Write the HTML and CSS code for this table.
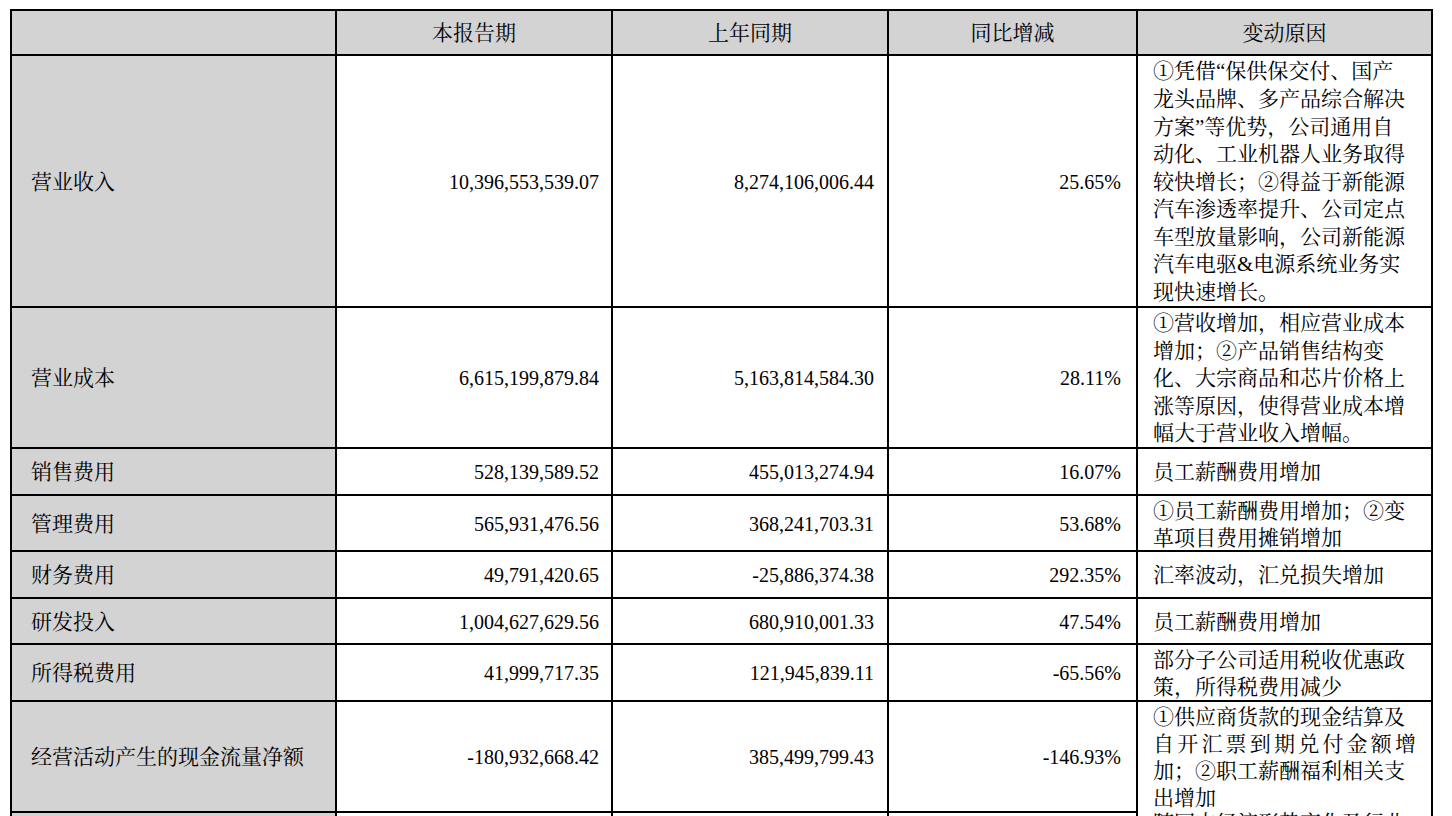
FILE: index.html
```html
<!DOCTYPE html>
<html lang="zh-CN">
<head>
<meta charset="utf-8">
<title>财务数据变动表</title>
<link rel="stylesheet" href="styles.css">
</head>
<body>
<div class="tbl">
  <div class="c head label"></div>
  <div class="c head">本报告期</div>
  <div class="c head">上年同期</div>
  <div class="c head">同比增减</div>
  <div class="c head">变动原因</div>

  <div class="c label">营业收入</div>
  <div class="c num n1">10,396,553,539.07</div>
  <div class="c num n2">8,274,106,006.44</div>
  <div class="c num n3">25.65%</div>
  <div class="c reason">
    <div>①凭借“保供保交付、国产</div>
    <div>龙头品牌、多产品综合解决</div>
    <div>方案”等优势，公司通用自</div>
    <div>动化、工业机器人业务取得</div>
    <div>较快增长；②得益于新能源</div>
    <div>汽车渗透率提升、公司定点</div>
    <div>车型放量影响，公司新能源</div>
    <div>汽车电驱&amp;电源系统业务实</div>
    <div>现快速增长。</div>
  </div>

  <div class="c label">营业成本</div>
  <div class="c num n1">6,615,199,879.84</div>
  <div class="c num n2">5,163,814,584.30</div>
  <div class="c num n3">28.11%</div>
  <div class="c reason">
    <div>①营收增加，相应营业成本</div>
    <div>增加；②产品销售结构变</div>
    <div>化、大宗商品和芯片价格上</div>
    <div>涨等原因，使得营业成本增</div>
    <div>幅大于营业收入增幅。</div>
  </div>

  <div class="c label">销售费用</div>
  <div class="c num n1">528,139,589.52</div>
  <div class="c num n2">455,013,274.94</div>
  <div class="c num n3">16.07%</div>
  <div class="c reason"><div>员工薪酬费用增加</div></div>

  <div class="c label">管理费用</div>
  <div class="c num n1">565,931,476.56</div>
  <div class="c num n2">368,241,703.31</div>
  <div class="c num n3">53.68%</div>
  <div class="c reason tight">
    <div>①员工薪酬费用增加；②变</div>
    <div>革项目费用摊销增加</div>
  </div>

  <div class="c label">财务费用</div>
  <div class="c num n1">49,791,420.65</div>
  <div class="c num n2">-25,886,374.38</div>
  <div class="c num n3">292.35%</div>
  <div class="c reason"><div>汇率波动，汇兑损失增加</div></div>

  <div class="c label">研发投入</div>
  <div class="c num n1">1,004,627,629.56</div>
  <div class="c num n2">680,910,001.33</div>
  <div class="c num n3">47.54%</div>
  <div class="c reason"><div>员工薪酬费用增加</div></div>

  <div class="c label">所得税费用</div>
  <div class="c num n1">41,999,717.35</div>
  <div class="c num n2">121,945,839.11</div>
  <div class="c num n3">-65.56%</div>
  <div class="c reason tight">
    <div>部分子公司适用税收优惠政</div>
    <div>策，所得税费用减少</div>
  </div>

  <div class="c label">经营活动产生的现金流量净额</div>
  <div class="c num n1">-180,932,668.42</div>
  <div class="c num n2">385,499,799.43</div>
  <div class="c num n3">-146.93%</div>
  <div class="c reason tight">
    <div>①供应商货款的现金结算及</div>
    <div class="spread">自开汇票到期兑付金额增</div>
    <div>加；②职工薪酬福利相关支</div>
    <div>出增加</div>
  </div>

  <div class="c label"></div>
  <div class="c num n1"></div>
  <div class="c num n2"></div>
  <div class="c num n3"></div>
  <div class="c reason top">
    <div>随国内经济形势变化及行业</div>
  </div>
</div>
</body>
</html>
```

FILE: styles.css
```css
html, body {
  margin: 0;
  padding: 0;
  background: #fff;
  overflow: hidden;
}

body {
  font-family: "Liberation Serif", "Noto Serif CJK SC", "Noto Sans CJK SC", serif;
  color: #000;
}

.tbl {
  display: grid;
  grid-template-columns: 323px 274px 274px 247px 293px;
  grid-template-rows: 43px 250px 139px 45px 54px 45px 44px 55px 109px 60px;
  gap: 2px;
  padding: 2px;
  background: #000;
  width: max-content;
  margin: 9px 0 0 10px;
}

.c {
  background: #fff;
  display: flex;
  align-items: center;
  font-size: 21px;
  line-height: 27.6px;
  padding-top: 3px;
  overflow: hidden;
}

.head {
  background: #d3d3d3;
  justify-content: center;
}

.label {
  background: #d3d3d3;
  padding-left: 19px;
}

.head.label {
  padding-left: 0;
}

.num {
  justify-content: flex-end;
  font-size: 20px;
}

.n1 { padding-right: 12px; }
.n2 { padding-right: 13px; }
.n3 { padding-right: 15px; }

.reason {
  flex-direction: column;
  justify-content: center;
  align-items: flex-start;
  padding-left: 15px;
}

.reason.tight {
  line-height: 27px;
}

.reason.top {
  justify-content: flex-start;
  padding-top: 0;
  margin-top: -3px;
}

.spread {
  width: 263px;
  text-align: justify;
  text-align-last: justify;
}
```
